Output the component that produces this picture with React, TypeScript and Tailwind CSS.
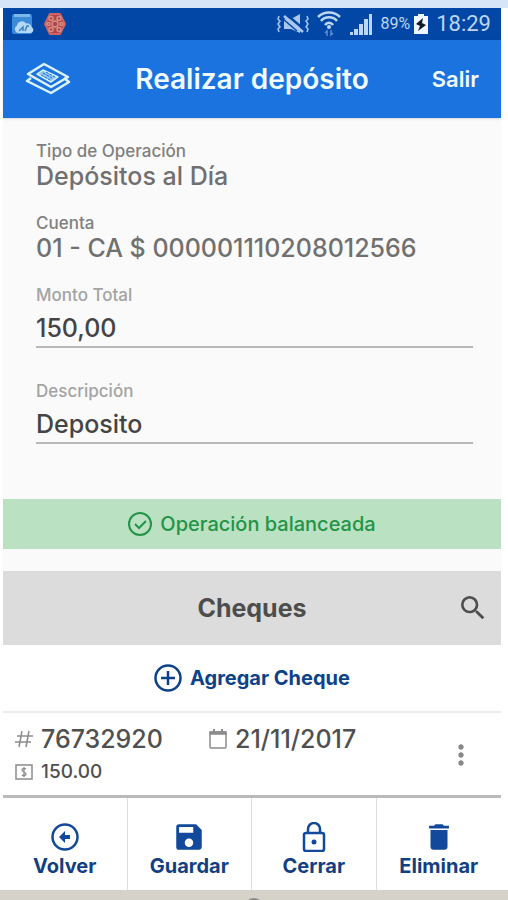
import type { ReactNode } from 'react'
import { MdDelete, MdMoreVert, MdSave, MdSearch } from 'react-icons/md'

function CloudAppIcon() {
  return (
    <svg viewBox="0 0 24 24" className="size-6">
      <rect x="1" y="2" width="20" height="20" rx="2" fill="#3b8bd8" />
      <path d="M3 2h16v3H3z" fill="#7db8ea" />
      <path d="M7 21a4 4 0 0 1-1-7.500 5 5 0 0 1 9-2 4.500 4.500 0 0 1 5.500 3.500A3.200 3.200 0 0 1 20 21z" fill="#b4d8f5" />
      <path d="M8 19l4-4v4M14 19l2-5h2" fill="none" stroke="#3d80c4" strokeWidth="1.500" />
    </svg>
  )
}

function HexAppIcon() {
  return (
    <svg viewBox="0 0 24 24" className="size-6" fill="none">
      <path d="M7 2h10l5 10-5 10H7L2 12z" fill="#a8484f" stroke="#d2635f" strokeWidth="2" strokeLinejoin="round" />
      <g stroke="#e08a82" strokeWidth="1.500">
        <circle cx="12" cy="12" r="3" />
        <circle cx="8" cy="6.500" r="2" />
        <circle cx="16" cy="6.500" r="2" />
        <circle cx="5.500" cy="12" r="1.500" />
        <circle cx="18.500" cy="12" r="1.500" />
        <circle cx="8" cy="17.500" r="2" />
        <circle cx="16" cy="17.500" r="2" />
      </g>
    </svg>
  )
}

function MutedIcon() {
  return (
    <svg viewBox="0 0 32 20" className="h-5 w-8" fill="none" stroke="#a9c8ef">
      <path d="M2 2l-1 3 2 2-2 3 2 3-2 2 1 3M30 2l1 3-2 2 2 3-2 3 2 2-1 3" strokeWidth="1.500" />
      <path d="M7 5h7l9-5v19l-9-4H7z" fill="#a9c8ef" stroke="none" />
      <path d="M10 1l19 16" stroke="#0347a6" strokeWidth="2.500" />
      <path d="M7 2l19 16" strokeWidth="2.500" />
      <path d="M6 5l14 12" stroke="#0347a6" strokeWidth="1.500" />
    </svg>
  )
}

function WifiIcon() {
  return (
    <svg viewBox="0 0 24 26" className="h-[26px] w-6" fill="none" stroke="#bcd6f5" strokeWidth="2.500">
      <path d="M1 6c6-6 16-6 22 0M4 10c4-5 12-5 16 0M8 14c2-3 6-3 8 0" />
      <circle cx="12" cy="16" r="2" fill="#bcd6f5" stroke="none" />
      <path d="M10 25v-5l-2 2M14 19v5l2-2" stroke="#5b8fd6" strokeWidth="1.500" />
    </svg>
  )
}

function SignalIcon() {
  return (
    <svg viewBox="0 0 24 22" className="h-[22px] w-6" fill="#bcd6f5">
      <path d="M1 19h3v3H1zM5 16h4v6H5zM10 11h4v11h-4zM15 6h4v16h-4zM20 1h3v21h-3z" />
    </svg>
  )
}

function BatteryIcon() {
  return (
    <svg viewBox="0 0 14 20" className="h-5 w-[14px]">
      <path d="M4 0h6v2h4v18H0V2h4z" fill="#eef6ff" />
      <path d="M9 4l-7 6 4 2-2 5 8-6-4-2z" fill="#111827" />
    </svg>
  )
}

function Logo() {
  return (
    <svg viewBox="0 0 46 34" className="h-[34px] w-[46px]" fill="none" stroke="#dcf3ff" strokeWidth="2.500" strokeLinejoin="round">
      <path d="M19 2l24 13-17 10L3 12z" />
      <path d="M6 16l-4 3 24 12 18-11-5-4" />
      <path d="M18 8l15 7-7 5-14-8z" fill="#8fc4f2" strokeWidth="1.500" />
      <path d="M18 11l9 5M16 13l9 5M21 10l9 5" stroke="#1a73de" strokeWidth="1" strokeDasharray="3 1" />
    </svg>
  )
}

function CheckCircle() {
  return (
    <svg viewBox="0 0 24 24" className="size-6" fill="none" stroke="#219447" strokeWidth="2">
      <circle cx="12" cy="12" r="11" />
      <path d="M7 12l4 4 7-7" />
    </svg>
  )
}

function PlusCircle() {
  return (
    <svg viewBox="0 0 28 28" className="size-7" fill="none" stroke="#0d4289" strokeWidth="2.500">
      <circle cx="14" cy="14" r="12.500" />
      <path d="M14 7v14M7 14h14" />
    </svg>
  )
}

function HashIcon() {
  return (
    <svg viewBox="0 0 18 18" className="size-[18px]" fill="none" stroke="#8c8c8c" strokeWidth="1.500">
      <path d="M7 1L4 17M14 1l-3 16M2 6h16M0 12h16" />
    </svg>
  )
}

function CalendarIcon() {
  return (
    <svg viewBox="0 0 18 20" className="h-5 w-[18px]" fill="none" stroke="#8c8c8c" strokeWidth="1.500">
      <rect x="1" y="3" width="16" height="16" rx="1" />
      <path d="M1 3h16v2H1z" fill="#8c8c8c" />
      <path d="M5 0v3M13 0v3" strokeWidth="2" />
    </svg>
  )
}

function MoneyIcon() {
  return (
    <svg viewBox="0 0 18 16" className="h-4 w-[18px]" fill="none" stroke="#8c8c8c">
      <rect x="1" y="1" width="16" height="14" strokeWidth="1.500" />
      <path d="M11 5c-1-1-4-1-4 1s4 2 4 4-3 2-4 1M9 3v10" strokeWidth="1.300" />
    </svg>
  )
}

function BackIcon() {
  return (
    <svg viewBox="0 0 28 28" className="size-7" fill="none" stroke="#12499a" strokeWidth="2.500">
      <circle cx="14" cy="14" r="12.500" />
      <path d="M8 14l6-6v4h5v4h-5v4z" fill="#12499a" stroke="none" />
    </svg>
  )
}

function LockIcon() {
  return (
    <svg viewBox="0 0 24 30" className="h-[30px] w-6" fill="none" stroke="#12499a" strokeWidth="2.500">
      <rect x="2" y="11" width="20" height="18" rx="2" />
      <path d="M6 11V7a6 6 0 0 1 12 0v4" />
      <circle cx="12" cy="20" r="2.500" fill="#12499a" stroke="none" />
    </svg>
  )
}

function ReadOnlyField({ label, value }: { label: string; value: string }) {
  return (
    <div className="h-[72px]">
      <dt className="text-[17px] leading-5 text-[#808080]">{label}</dt>
      <dd className="text-[25px] leading-[30px] text-[#707070]">{value}</dd>
    </div>
  )
}

function TextField({ id, label, value }: { id: string; label: string; value: string }) {
  return (
    <div className="flex h-24 flex-col">
      <label htmlFor={id} className="text-[17px] leading-5 text-[#a3a3a3]">
        {label}
      </label>
      <input
        id={id}
        defaultValue={value}
        className="h-[43px] w-full border-b-2 border-[#b8b8b8] bg-transparent pt-1 text-[25px] leading-[30px] text-[#444] outline-none"
      />
    </div>
  )
}

function ActionButton({ label, children }: { label: string; children: ReactNode }) {
  return (
    <button type="button" className="flex flex-col items-center pt-6">
      <span className="flex h-[30px] items-center text-[#12499a]">{children}</span>
      <span className="text-xl leading-7 font-bold text-[#123f82]">{label}</span>
    </button>
  )
}

export default function App() {
  return (
    <div className="flex min-h-screen flex-col bg-white pt-2 font-['Inter',sans-serif] [background-image:linear-gradient(#d6e6f8,#d6e6f8)] bg-[length:100%_8px] bg-no-repeat">
      <div className="mr-[7px] ml-[3px] flex grow flex-col bg-[#fafafa]">
        <div className="flex h-8 items-center justify-between bg-[#0347a6] pr-[10px] pl-2 font-['Roboto',sans-serif] text-[#bcd6f5]">
          <div className="flex items-center gap-2">
            <CloudAppIcon />
            <HexAppIcon />
          </div>
          <div className="flex items-center">
            <MutedIcon />
            <span className="ml-2"><WifiIcon /></span>
            <span className="ml-2"><SignalIcon /></span>
            <span className="ml-2 text-base">89%</span>
            <span className="ml-1"><BatteryIcon /></span>
            <span className="ml-2 text-[22px] leading-8">18:29</span>
          </div>
        </div>

        <header className="grid h-[78px] grid-cols-[1fr_auto_1fr] items-center bg-[#1a73de] px-[22px] text-[#f0faff] shadow">
          <Logo />
          <h1 className="text-[28px] leading-8 font-semibold">Realizar depósito</h1>
          <button type="button" className="justify-self-end text-[22px] leading-8 font-semibold">
            Salir
          </button>
        </header>

        <form className="pt-[23px] pr-7 pb-[22px] pl-[33px] font-medium">
          <dl>
            <ReadOnlyField label="Tipo de Operación" value="Depósitos al Día" />
            <ReadOnlyField label="Cuenta" value="01 - CA $ 000001110208012566" />
          </dl>
          <TextField id="monto" label="Monto Total" value="150,00" />
          <TextField id="descripcion" label="Descripción" value="Deposito" />
        </form>

        <div className="flex h-[50px] items-center justify-center gap-2 bg-[#bbe1c3] text-xl font-medium text-[#219447]">
          <CheckCircle />
          <span>Operación balanceada</span>
        </div>

        <section className="mt-[22px]">
          <div className="grid h-[74px] grid-cols-[1fr_auto_1fr] items-center bg-[#dcdcdc] px-3 text-[#4d4d4d]">
            <h2 className="col-start-2 text-[25px] leading-8 font-bold">Cheques</h2>
            <button type="button" aria-label="Buscar" className="justify-self-end">
              <MdSearch className="size-8" />
            </button>
          </div>
          <button
            type="button"
            className="flex h-[68px] w-full items-center justify-center gap-2 border-b-2 border-[#ebebeb] bg-white text-xl font-bold text-[#0d4289]"
          >
            <PlusCircle />
            <span>Agregar Cheque</span>
          </button>
          <div className="flex h-[82px] items-center justify-between bg-white pt-[2px] pr-6 pl-3 font-medium text-[#505050]">
            <div className="grid grid-cols-[194px_auto] gap-y-1">
              <div className="flex items-center gap-2 text-[25px] leading-[30px]">
                <HashIcon />
                <span>76732920</span>
              </div>
              <div className="flex items-center gap-2 text-[25px] leading-[30px]">
                <CalendarIcon />
                <span>21/11/2017</span>
              </div>
              <div className="flex items-center gap-2 text-[19px] leading-7">
                <MoneyIcon />
                <span>150.00</span>
              </div>
            </div>
            <button type="button" aria-label="Opciones" className="text-[#888]">
              <MdMoreVert className="size-8" />
            </button>
          </div>
        </section>

        <nav className="grid h-[95px] grid-cols-4 divide-x divide-[#dedede] border-t-3 border-[#bababa] bg-white">
          <ActionButton label="Volver"><BackIcon /></ActionButton>
          <ActionButton label="Guardar"><MdSave className="size-[34px]" /></ActionButton>
          <ActionButton label="Cerrar"><LockIcon /></ActionButton>
          <ActionButton label="Eliminar"><MdDelete className="size-[34px]" /></ActionButton>
        </nav>
      </div>
      <div className="flex h-[10px] justify-center overflow-hidden bg-[#d5d2ca]">
        <div className="mt-2 size-5 shrink-0 rounded-full bg-[#8f8d89]" />
      </div>
    </div>
  )
}
